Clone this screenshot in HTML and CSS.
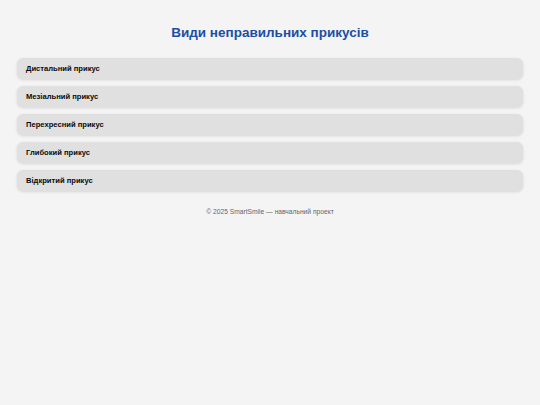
FILE: index.html
```html
<!DOCTYPE html>
<html lang="uk">
<head>
<meta charset="utf-8">
<title>Види неправильних прикусів</title>
<link rel="stylesheet" href="styles.css">
</head>
<body>
<main class="page">
  <h1 class="title">Види неправильних прикусів</h1>
  <ul class="list">
    <li class="item">Дистальний прикус</li>
    <li class="item">Мезіальний прикус</li>
    <li class="item">Перехресний прикус</li>
    <li class="item">Глибокий прикус</li>
    <li class="item">Відкритий прикус</li>
  </ul>
  <footer class="footer">© 2025 SmartSmile — навчальний проект</footer>
</main>
</body>
</html>
```

FILE: styles.css
```css
html, body {
  margin: 0;
  padding: 0;
  background: #f4f4f4;
}
body {
  font-family: "Liberation Sans", Arial, sans-serif;
  color: #111;
}
.page {
  padding: 24px 17px 0;
}
.title {
  margin: 0 0 16px;
  text-align: center;
  font-size: 13.5px;
  line-height: 18px;
  font-weight: bold;
  color: #1a4fa3;
}
.list {
  list-style: none;
  margin: 0;
  padding: 0;
  display: flex;
  flex-direction: column;
  gap: 7px;
}
.item {
  height: 21px;
  line-height: 21px;
  padding: 0 9px;
  background: #e0e0e0;
  border-radius: 6px;
  box-shadow: 0 1px 3px rgba(0, 0, 0, 0.12);
  font-size: 7.6px;
  font-weight: bold;
  color: #0a0a0a;
}
.footer {
  margin-top: 16px;
  text-align: center;
  font-size: 6.7px;
  line-height: 10px;
  color: #666;
}
```
